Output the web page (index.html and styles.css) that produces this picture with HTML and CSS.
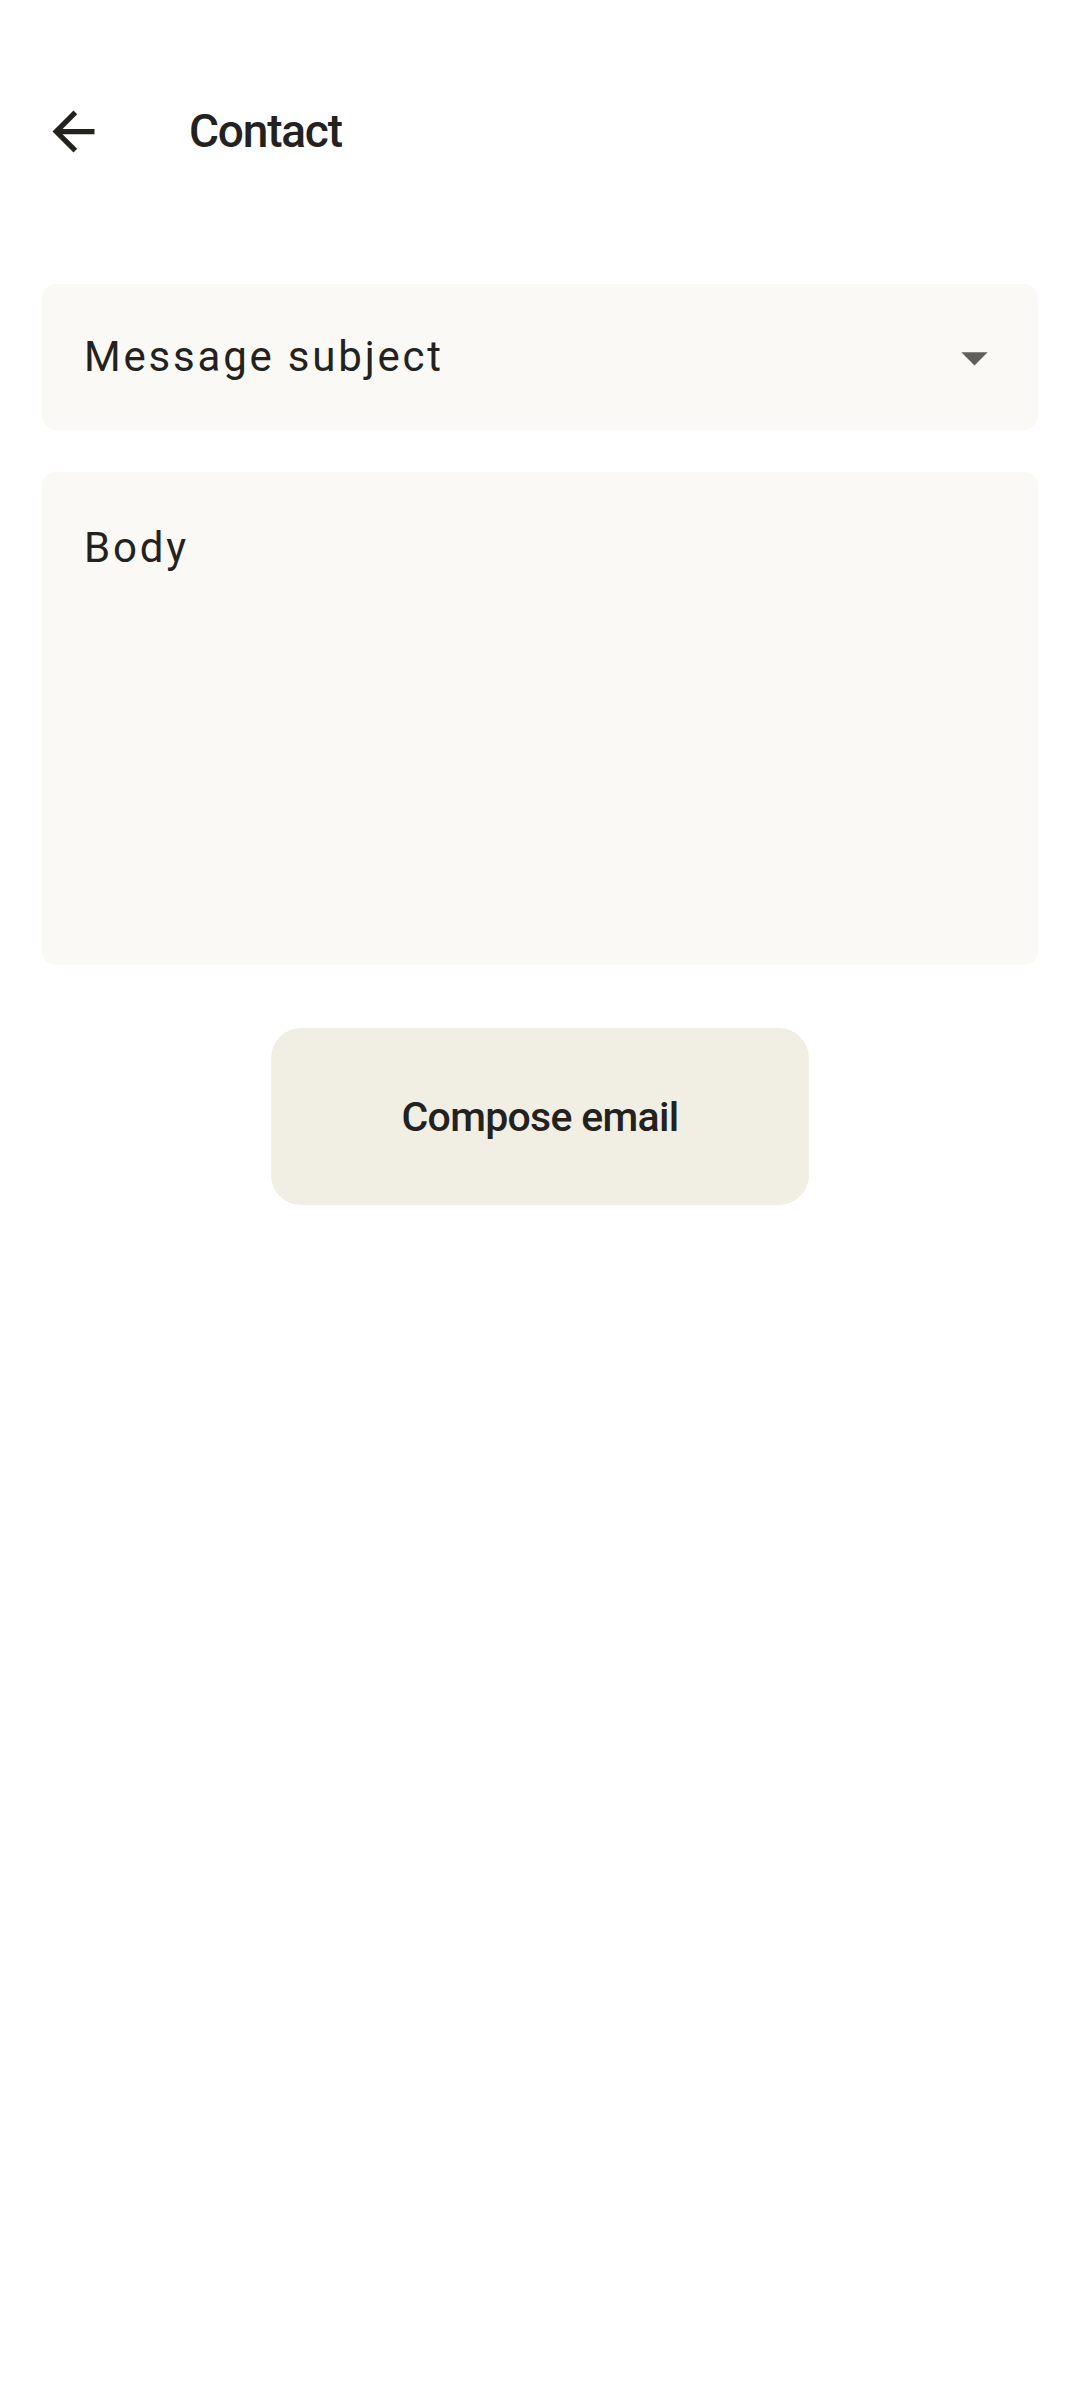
FILE: index.html
```html
<!DOCTYPE html>
<html lang="en">
<head>
<meta charset="utf-8">
<title>Contact</title>
<link rel="stylesheet" href="styles.css">
</head>
<body>
<div class="screen">
  <header class="appbar">
    <div class="nav-icon">
      <svg viewBox="0 0 24 24" width="63" height="63"><path d="M20 11H7.83l5.59-5.59L12 4l-8 8 8 8 1.41-1.41L7.83 13H20v-2z" fill="#23221e"/></svg>
    </div>
    <h1 class="title">Contact</h1>
  </header>
  <main class="form">
    <div class="field field-select">
      <span class="field-text">Message subject</span>
      <div class="drop-icon">
        <svg viewBox="0 0 24 24" width="63" height="63"><path d="M7 10l5 5 5-5z" fill="#5f5f5c"/></svg>
      </div>
    </div>
    <div class="field field-body">
      <span class="field-text">Body</span>
    </div>
    <div class="actions">
      <button class="btn">Compose email</button>
    </div>
  </main>
</div>
</body>
</html>
```

FILE: styles.css
```css
* { box-sizing: border-box; }
html, body {
  margin: 0;
  padding: 0;
  background: #ffffff;
}
body {
  width: 1080px;
  height: 2400px;
  font-family: Roboto, "Noto Sans", "Liberation Sans", sans-serif;
  color: #23221e;
}
.appbar {
  display: flex;
  align-items: center;
  height: 126px;
  margin-top: 68px;
  padding-left: 42px;
}
.nav-icon {
  width: 63px;
  height: 63px;
  display: flex;
}
.title {
  margin: 0 0 0 84px;
  font-size: 46px;
  font-weight: 500;
  line-height: 62px;
  letter-spacing: -1.2px;
  color: #23221e;
}
.form {
  padding: 90px 42px 0 42px;
  display: flex;
  flex-direction: column;
}
.field {
  background: #faf9f5;
  border-radius: 14px;
}
.field-text {
  font-size: 42px;
  line-height: 56px;
  letter-spacing: 2.8px;
  color: #23221e;
}
.field-select {
  height: 146px;
  display: flex;
  align-items: center;
  justify-content: space-between;
  padding: 0 32px 0 42px;
}
.drop-icon {
  width: 63px;
  height: 63px;
  display: flex;
}
.field-body {
  margin-top: 42px;
  height: 493px;
  padding: 48px 42px 0 42px;
}
.actions {
  display: flex;
  justify-content: center;
  margin-top: 63px;
}
.btn {
  width: 538px;
  height: 177px;
  border: none;
  border-radius: 30px;
  background: #f1efe4;
  font-family: Roboto, "Noto Sans", "Liberation Sans", sans-serif;
  font-size: 41px;
  font-weight: 500;
  letter-spacing: -0.7px;
  color: #23221e;
  padding: 0;
}
```
